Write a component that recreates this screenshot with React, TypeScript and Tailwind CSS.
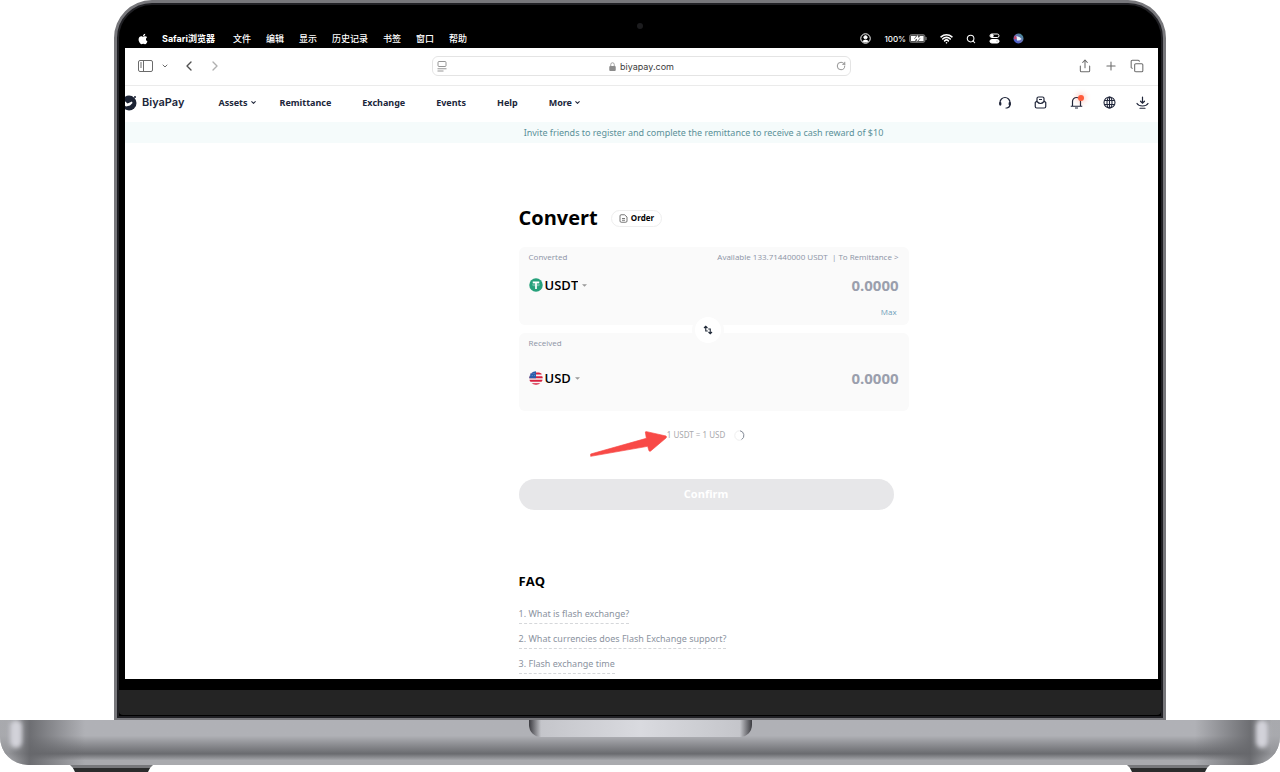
import React from "react";
import { FaApple } from "react-icons/fa";
import { ChevronDown, ChevronLeft, ChevronRight, Copy, Plus, RotateCw, Search, Share, Wifi } from "lucide-react";

const menus = ["文件", "编辑", "显示", "历史记录", "书签", "窗口", "帮助"];

function MenuBar() {
  return (
    <div className="flex h-[19px] items-center justify-between pr-[134px] pl-3 text-[9px] leading-none font-medium text-white">
      <div className="flex items-center gap-[15px]">
        <FaApple className="size-3" />
        <span className="-ml-[2px] mr-[3px] font-bold">Safari浏览器</span>
        {menus.map((m) => (
          <span key={m}>{m}</span>
        ))}
      </div>
      <div className="flex items-center gap-[13px]">
        <svg className="size-[11px]" viewBox="0 0 22 22" fill="none" stroke="white" strokeWidth="2">
          <circle cx="11" cy="11" r="9.5" />
          <circle cx="11" cy="8.5" r="3.2" fill="white" />
          <path d="M5 16.5c2-4 10-4 12 0-3 3.500-9 3.500-12 0z" fill="white" stroke="none" />
        </svg>
        <span className="flex items-center gap-[3px] text-[8px]">
          100%
          <svg className="h-[9px] w-[18px]" viewBox="0 0 36 18">
            <rect x="1" y="1" width="31" height="16" rx="4" fill="#555" stroke="#777" strokeWidth="1.500" />
            <path d="M4 4h10l-4 6h4l-2 4H4zM22 4h7v10H19l4-6h-3z" fill="white" />
            <path d="M18 2l-7 8h5l-1 6 8-9h-5z" fill="white" />
            <path d="M34 6v6" stroke="#999" strokeWidth="2" />
          </svg>
        </span>
        <Wifi className="size-[13px]" strokeWidth={3} />
        <Search className="size-[10px]" strokeWidth={2.5} />
        <svg className="size-[11px]" viewBox="0 0 22 22" fill="none" stroke="white" strokeWidth="2">
          <rect x="2" y="2" width="18" height="7" rx="3.500" />
          <rect x="2" y="13" width="18" height="7" rx="3.500" fill="white" />
          <circle cx="6" cy="5.500" r="2.500" fill="white" />
          <circle cx="16" cy="16.500" r="1.500" fill="black" />
        </svg>
        <svg className="size-[11px]" viewBox="0 0 22 22">
          <defs>
            <linearGradient id="orb" x1="0" y1="1" x2="1" y2="0">
              <stop offset="0" stopColor="#3455d8" />
              <stop offset=".5" stopColor="#6c6fb8" />
              <stop offset="1" stopColor="#37958a" />
            </linearGradient>
          </defs>
          <circle cx="11" cy="11" r="10" fill="url(#orb)" />
          <path d="M2 13a10 10 0 0 1 2-8l6 6z" fill="#c1456d" />
          <path d="M7 6q8 2 10 6-4 4-9 3z" fill="#e9f6ff" />
        </svg>
      </div>
    </div>
  );
}

function Toolbar() {
  return (
    <div className="grid h-[38px] grid-cols-[1fr_419px_1fr] items-center border-b border-[#ebebeb] pb-px text-[#6b6b6b]">
      <div className="flex items-center pl-[13px]">
        <button aria-label="Sidebar">
          <svg className="h-[12px] w-[15px]" viewBox="0 0 30 24" fill="none" stroke="currentColor" strokeWidth="2">
            <rect x="1" y="1" width="28" height="22" rx="3" />
            <path d="M11 1v22M4 6h4M4 10h4M4 14h4" />
          </svg>
        </button>
        <button aria-label="Tab groups" className="ml-2">
          <ChevronDown className="size-2" strokeWidth={3} />
        </button>
        <button aria-label="Back" className="ml-3">
          <ChevronLeft className="size-4 text-[#505050]" strokeWidth={2} />
        </button>
        <button aria-label="Forward" className="ml-[10px]">
          <ChevronRight className="size-4 text-[#b0b0b0]" strokeWidth={2} />
        </button>
      </div>
      <div className="flex h-5 items-center justify-between rounded-md border border-[#e4e4e4] px-[4px]">
        <svg className="h-[11px] w-[10px]" viewBox="0 0 20 22" fill="none" stroke="#8a8a8a" strokeWidth="1.800">
          <rect x="2" y="1" width="16" height="10" rx="2" />
          <path d="M1 15.500h18M1 20h12" />
        </svg>
        <span className="flex items-center gap-1 font-['Inter',sans-serif] text-[9px] leading-none text-[#3c3c3c]">
          <svg className="h-[9px] w-[7px]" viewBox="0 0 14 18">
            <path d="M3.500 9V5a3.500 3.500 0 0 1 7 0v4" fill="none" stroke="#999" strokeWidth="1.800" />
            <rect x="0.500" y="8" width="13" height="10" rx="2" fill="#8c8c8c" />
          </svg>
          biyapay.com
        </span>
        <button aria-label="Reload">
          <RotateCw className="size-[10px] text-[#808080]" strokeWidth={2} />
        </button>
      </div>
      <div className="flex items-center justify-end gap-3 pr-[14px]">
        <button aria-label="Share">
          <Share className="size-[14px]" strokeWidth={1.8} />
        </button>
        <button aria-label="New tab">
          <Plus className="size-[14px]" strokeWidth={1.8} />
        </button>
        <button aria-label="Tabs">
          <Copy className="size-[14px]" strokeWidth={1.8} />
        </button>
      </div>
    </div>
  );
}

const links = ["Remittance", "Exchange", "Events", "Help"];

function SiteHeader() {
  return (
    <header className="flex h-9 items-center justify-between pr-[9px] pb-[3px] text-[#20263a]">
      <div className="flex items-center">
        <svg className="-ml-1 size-4" viewBox="0 0 32 32">
          <circle cx="16" cy="16" r="15" fill="#1c2334" />
          <path d="M6 11l7 6 9-4 1 3-5 5-8 2-6-4z" fill="white" />
          <circle cx="28" cy="4" r="2" fill="#1c2334" />
        </svg>
        <span className="ml-[5px] font-['Inter',sans-serif] text-[11px] leading-none font-semibold">BiyaPay</span>
        <nav className="ml-[34px] flex items-center gap-[31px] font-['Noto_Sans',sans-serif] text-[9px] leading-none font-bold">
          <button className="-mr-2 flex items-center gap-[2px]">
            Assets
            <ChevronDown className="size-[7px]" strokeWidth={3.5} />
          </button>
          {links.map((l) => (
            <a key={l} href="#">
              {l}
            </a>
          ))}
          <button className="flex items-center gap-[2px]">
            More
            <ChevronDown className="size-[7px]" strokeWidth={3.5} />
          </button>
        </nav>
      </div>
      <div className="flex items-center gap-5">
        <button aria-label="Support" className="mr-[2px]">
          <svg className="size-[14px]" viewBox="0 0 28 28" fill="none" stroke="currentColor" strokeWidth="2.400" strokeLinecap="round">
            <path d="M4 15v-2a10 10 0 0 1 20 0v4c0 4-2 6-6 7h-2" />
            <path d="M4.500 14v3M23.500 14v3" strokeWidth="4.500" />
          </svg>
        </button>
        <button aria-label="Gifts" className="mr-[3px]">
          <svg className="size-[13px]" viewBox="0 0 26 26" fill="none" stroke="currentColor" strokeWidth="2.400" strokeLinejoin="round">
            <path d="M6 11V5q0-3 3-3h8q3 0 3 3v6" />
            <path d="M6 10l-3.500 3v8q0 3 3 3h15q3 0 3-3v-8L20 10" />
            <path d="M10 7h6M6 11q7 8 14 0" />
          </svg>
        </button>
        <button aria-label="Notifications" className="relative">
          <svg className="size-[13px]" viewBox="0 0 26 26" fill="none" stroke="currentColor" strokeWidth="2.400" strokeLinejoin="round">
            <path d="M5 20v-9a8 8 0 0 1 16 0v9M1.500 20.500h23" />
            <path d="M10 24h6" />
          </svg>
          <span className="absolute -top-px -right-px size-[6px] rounded-full bg-[#ff5b3a] shadow-[0_0_5px_2px_rgba(255,91,58,0.25)]" />
        </button>
        <button aria-label="Language">
          <svg className="size-[13px]" viewBox="0 0 26 26" fill="none" stroke="currentColor" strokeWidth="2.200">
            <circle cx="13" cy="13" r="11" />
            <ellipse cx="13" cy="13" rx="5" ry="11" />
            <path d="M13 2v22M3 9h20M3 17h20" />
          </svg>
        </button>
        <button aria-label="Download">
          <svg className="size-[13px]" viewBox="0 0 26 26" fill="none" stroke="currentColor" strokeWidth="2.400" strokeLinecap="round">
            <path d="M13 2v12M9 10.500l4 4 4-4" />
            <path d="M2 15q3 5 11 5t11-5M8 24.500h10" />
          </svg>
        </button>
      </div>
    </header>
  );
}

function Tether() {
  return (
    <svg className="size-[14px]" viewBox="0 0 28 28">
      <circle cx="14" cy="14" r="13.500" fill="#26a17b" />
      <path d="M7.500 7h13v3.500h-4.800V22h-3.400V10.500H7.500z" fill="white" />
      <ellipse cx="14" cy="13.800" rx="7" ry="1.800" fill="none" stroke="white" strokeWidth="0.800" />
    </svg>
  );
}

function UsFlag() {
  return (
    <svg className="size-[14px]" viewBox="0 0 28 28">
      <clipPath id="disc">
        <circle cx="14" cy="14" r="13.500" />
      </clipPath>
      <g clipPath="url(#disc)">
        <rect width="28" height="28" fill="#f4f4f4" />
        <path d="M0 5h28M0 12.500h28M0 19.500h28M0 26.500h28" stroke="#d8203f" strokeWidth="3.600" />
        <rect width="14" height="14.500" fill="#2a5caa" />
        <path d="M4 5h8M3 9h10" stroke="#9fc0ea" strokeWidth="1" strokeDasharray="1.500 2" />
      </g>
    </svg>
  );
}

function CurrencyRow({ id, code, icon }: { id: string; code: string; icon: React.ReactNode }) {
  const other = code === "USD" ? "USDT" : "USD";
  return (
    <div className="flex items-center justify-between">
      <div className="flex items-center">
        {icon}
        <select
          aria-label={id + " currency"}
          defaultValue={code}
          className="ml-[2px] field-sizing-content appearance-none bg-transparent text-[13px] leading-5 font-semibold text-black"
        >
          <option>{code}</option>
          <option>{other}</option>
        </select>
        <svg className="ml-1 h-[3px] w-[5px]" viewBox="0 0 6 3">
          <path d="M0 0h6L3 3z" fill="#9a9a9a" />
        </svg>
      </div>
      <input
        id={id}
        placeholder="0.0000"
        className="w-32 bg-transparent text-right text-[15px] leading-5 font-bold outline-none placeholder:text-[#9a9fad]"
      />
    </div>
  );
}

const faqs = ["1. What is flash exchange?", "2. What currencies does Flash Exchange support?", "3. Flash exchange time"];

function ConvertPage() {
  return (
    <main className="pb-[5px] pl-[38.1%]">
      <div className="flex items-center gap-[13px] pt-[60px]">
        <h1 className="text-[20px] leading-[30px] font-bold text-black">Convert</h1>
        <button className="flex h-[17px] items-center gap-[3px] rounded-full border border-[#eeeeee] px-[7px] text-[8px] leading-none font-bold text-black">
          <svg className="size-[9px]" viewBox="0 0 18 18" fill="none" stroke="#555" strokeWidth="1.600">
            <path d="M4 1.500h7l5 4.500v8q0 2.500-2.500 2.500h-9Q2 16.500 2 14V4q0-2.500 2-2.500zM6 9h6M6 12.500h6" />
          </svg>
          Order
        </button>
      </div>

      <div className="relative mt-[14px] flex w-[390px] flex-col gap-2">
        <section className="h-[78px] rounded-md bg-[#fafafa] px-[10px] pt-[4px]">
          <div className="flex justify-between text-[8px] leading-[11px] text-[#8b93a5]">
            <label htmlFor="Converted">Converted</label>
            <span>
              Available 133.71440000 USDT &nbsp;|{" "}
              <a href="#">To Remittance &gt;</a>
            </span>
          </div>
          <div className="pt-[13px]">
            <CurrencyRow id="Converted" code="USDT" icon={<Tether />} />
          </div>
          <div className="flex justify-end pt-[11px] pr-[2px] text-[8px] leading-[11px] text-[#6f9fba]">
            <button>Max</button>
          </div>
        </section>
        <section className="h-[78px] rounded-md bg-[#fafafa] px-[10px] pt-[4px]">
          <div className="text-[8px] leading-[11px] text-[#8b93a5]">
            <label htmlFor="Received">Received</label>
          </div>
          <div className="pt-5">
            <CurrencyRow id="Received" code="USD" icon={<UsFlag />} />
          </div>
        </section>
        <button
          aria-label="Swap"
          className="absolute top-[67px] left-[173px] flex size-[32px] items-center justify-center rounded-full border-[3px] border-[#fafafa] bg-white"
        >
          <svg className="size-[10px]" viewBox="0 0 20 20" fill="none" stroke="#222b3a" strokeWidth="2.200">
            <path d="M2 6L5.500 2.500 9 6M5.500 3v9h4M18 14l-3.500 3.500L11 14M14.500 17V8h-4" />
          </svg>
        </button>
      </div>

      <div className="flex w-[375px] items-center justify-center pt-[18px]">
        <div className="relative flex items-center gap-[9px] font-['Noto_Sans',sans-serif] text-[8px] leading-3 text-[#a9a9ad]">
          1 USDT = 1 USD
          <svg className="size-[11px]" viewBox="0 0 22 22" fill="none" strokeWidth="1.800">
            <circle cx="11" cy="11" r="9.500" stroke="#ececec" />
            <path d="M12 1.500a9.500 9.500 0 0 1 3 17.500" stroke="#7d8592" />
          </svg>
          <svg className="absolute top-[2px] right-full h-[26px] w-[77px]" viewBox="0 0 231 78">
            <path
              d="M2 69L169 22L166 3Q167 1 170 2L228 15Q231 18 228 21L182 60Q178 62 177 59L173 46L2 76Z"
              fill="#f84a47"
              stroke="#f84a47"
              strokeWidth="2"
              strokeLinejoin="round"
            />
          </svg>
        </div>
      </div>

      <button className="mt-[38px] flex h-[31px] w-[375px] items-center justify-center rounded-full bg-[#e7e7e9] text-[11px] font-bold text-white">
        Confirm
      </button>

      <h2 className="mt-[62px] text-[13px] leading-[18px] font-bold text-black">FAQ</h2>
      <ul className="mt-[14px] flex flex-col items-start gap-[5px] font-['Noto_Sans',sans-serif] text-[9px] text-[#8b93a0]">
        {faqs.map((q) => (
          <li key={q} className="border-b border-dashed border-[#d5d7da] leading-[19px]">
            <a href="#">{q}</a>
          </li>
        ))}
      </ul>
    </main>
  );
}

function LaptopBase() {
  return (
    <div>
      <div className="relative flex h-[45px] justify-between overflow-hidden rounded-b-[28px] bg-linear-to-b from-[#b0b1b6] from-35% via-[#6a6b6f] via-75% to-[#a9aaae] to-90%">
        <div className="w-[85px] bg-linear-to-r from-[#a5a6aa]/70 from-10% via-[#66676b]/90 via-35% to-transparent">
          <div className="ml-[10px] h-[28px] w-[12px] rounded-md bg-[#d2d2d9] blur-[2px]" />
        </div>
        <div className="flex h-[17px] w-[223px] justify-between overflow-hidden rounded-b-[12px] bg-linear-to-r from-[#c2c3c8] via-[#d9dadf] to-[#c2c3c8]">
          <div className="w-[12px] bg-linear-to-r from-[#3b3b40] to-transparent" />
          <div className="w-[12px] bg-linear-to-l from-[#3b3b40] to-transparent" />
        </div>
        <div className="flex w-[85px] justify-end bg-linear-to-l from-[#a5a6aa]/70 from-10% via-[#66676b]/90 via-35% to-transparent">
          <div className="mr-[12px] h-[28px] w-[12px] rounded-md bg-[#d2d2d9] blur-[2px]" />
        </div>
      </div>
      <div className="flex justify-between px-[70px]">
        <Foot />
        <Foot />
      </div>
    </div>
  );
}

function Foot() {
  return (
    <svg className="h-[7px] w-[83px]" viewBox="0 0 83 7">
      <path d="M0 0h83l-4 4H4z" fill="#77787b" />
      <path d="M3 3h77l-2 4H5z" fill="#2b2c2c" />
    </svg>
  );
}

export default function App() {
  return (
    <div className="min-h-screen overflow-hidden bg-white font-['Open_Sans','Noto_Sans_CJK_SC',sans-serif]">
      <div className="mx-[114px] rounded-t-[38px] border-[3px] border-b-2 border-[#77777b] bg-[#77777b]">
        <div className="overflow-hidden rounded-t-[35px] border-2 border-[#202024] bg-black">
          <div className="flex h-6 items-end justify-center">
            <span className="size-[6px] rounded-full bg-[#1c1c1e]" />
          </div>
          <div className="pr-[3px] pl-[6px] font-['Inter','Noto_Sans_CJK_SC',sans-serif]">
            <MenuBar />
          </div>
          <div className="mr-[3px] ml-[6px] overflow-hidden bg-white">
            <Toolbar />
            <SiteHeader />
            <div className="bg-[#f5fbfb] pl-[124px] text-center font-['Noto_Sans',sans-serif] text-[9px] leading-[21px] text-[#5b9199]">
              Invite friends to register and complete the remittance to receive a cash reward of $10
            </div>
            <ConvertPage />
          </div>
          <div className="mt-[11px] mb-px h-[25px] rounded-b-sm bg-[#242424]" />
        </div>
      </div>
      <LaptopBase />
    </div>
  );
}
